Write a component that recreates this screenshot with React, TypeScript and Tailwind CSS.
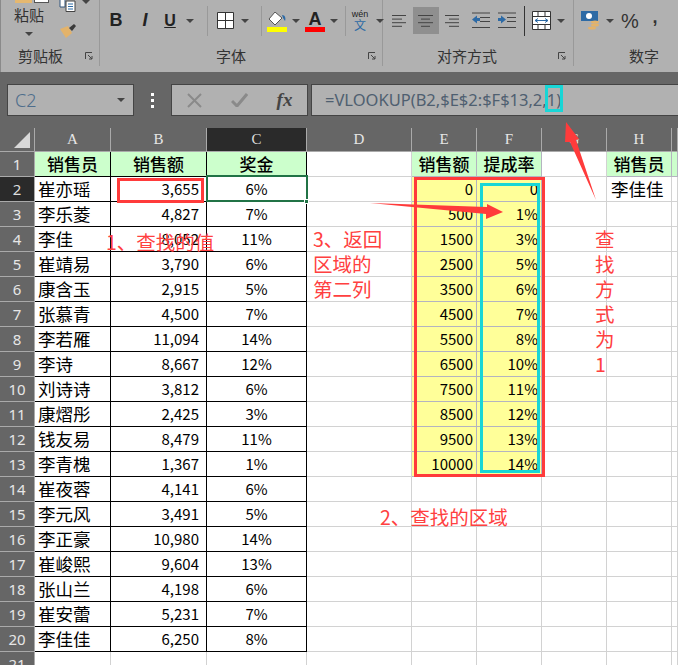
import type { ReactNode } from "react";

const cjk = "font-['Noto_Sans_CJK_SC','Noto_Sans',sans-serif]";
const gridCols = "grid grid-cols-[35px_76px_96px_100px_105px_65px_65px_65px_65px_1fr]";

const sales: [string, string, string][] = [
  ["崔亦瑶", "3,655", "6%"],
  ["李乐菱", "4,827", "7%"],
  ["李佳", "8,052", "11%"],
  ["崔靖易", "3,790", "6%"],
  ["康含玉", "2,915", "5%"],
  ["张慕青", "4,500", "7%"],
  ["李若雁", "11,094", "14%"],
  ["李诗", "8,667", "12%"],
  ["刘诗诗", "3,812", "6%"],
  ["康熠彤", "2,425", "3%"],
  ["钱友易", "8,479", "11%"],
  ["李青槐", "1,367", "1%"],
  ["崔夜蓉", "4,141", "6%"],
  ["李元风", "3,491", "5%"],
  ["李正豪", "10,980", "14%"],
  ["崔峻熙", "9,604", "13%"],
  ["张山兰", "4,198", "6%"],
  ["崔安蕾", "5,231", "7%"],
  ["李佳佳", "6,250", "8%"],
];

const rates: [string, string][] = [
  ["0", "0"],
  ["500", "1%"],
  ["1500", "3%"],
  ["2500", "5%"],
  ["3500", "6%"],
  ["4500", "7%"],
  ["5500", "8%"],
  ["6500", "10%"],
  ["7500", "11%"],
  ["8500", "12%"],
  ["9500", "13%"],
  ["10000", "14%"],
];

function Caret() {
  return <span className="block w-0 h-0 border-x-[4px] border-x-transparent border-t-[4px] border-t-[#444]" />;
}

function Slot({ w, children, className = "" }: { w: number; children?: ReactNode; className?: string }) {
  return (
    <div style={{ width: w }} className={`flex shrink-0 items-center justify-center ${className}`}>
      {children}
    </div>
  );
}

function Launcher() {
  return (
    <svg width="8" height="8" viewBox="0 0 8 8" className="shrink-0">
      <path d="M0.5 7V0.5H7" fill="none" stroke="#444" />
      <path d="M3 3L7 7M7 4V7H4" fill="none" stroke="#444" />
    </svg>
  );
}

function Lines({ rows }: { rows: [number, number][] }) {
  return (
    <svg width="16" height="14" viewBox="0 0 16 14">
      {rows.map(([a, b], i) => (
        <line key={i} x1={a} x2={b} y1={1.5 + i * 3.6} y2={1.5 + i * 3.6} stroke="#444" />
      ))}
    </svg>
  );
}

function Ribbon() {
  return (
    <div className={`h-[72px] bg-[#b1b1b1] border-l border-[#8a8a8a] flex text-[#333] overflow-hidden ${cjk}`}>
      {/* clipboard */}
      <div className="w-[99px] shrink-0 border-r border-[#999] h-[66px] flex flex-col">
        <div className="h-[46px] flex">
          <div className="w-[58px] flex flex-col items-center">
            <div className="flex gap-[2px] h-[3px] ml-[4px]">
              <span className="w-[17px] bg-[#e5b870]" />
              <span className="w-[15px] bg-white border-x border-b border-[#555]" />
            </div>
            <span className="text-[15px] leading-[20px] mt-[2px] -ml-[2px]">粘贴</span>
            <span className="mt-[7px] -ml-[2px]"><Caret /></span>
          </div>
          <div className="flex flex-col">
            <div className="flex items-start">
              <svg width="18" height="12" viewBox="0 0 18 12">
                <path d="M1 0V7H6V0" fill="#fff" stroke="#33567f" />
                <path d="M7 1H16V11.5H7Z" fill="#fff" stroke="#444" />
                <path d="M9 4H14M9 6.5H14M9 9H14" stroke="#2d6aa5" />
              </svg>
              <span className="ml-[5px]"><Caret /></span>
            </div>
            <svg width="18" height="16" viewBox="0 0 18 16" className="mt-[11px]">
              <path d="M1 6L9 3L13 10L7 15Z" fill="#e3b36b" />
              <path d="M10 5L15 1L17 3L13 8Z" fill="#3a3a3a" />
            </svg>
          </div>
        </div>
        <div className="flex items-center mt-[4px] pl-[17px] pr-[6px] justify-between">
          <span className="text-[15px] leading-[20px]">剪贴板</span>
          <Launcher />
        </div>
      </div>
      {/* font */}
      <div className="w-[283px] shrink-0 border-r border-[#999] h-[66px] flex flex-col">
        <div className="h-[46px] flex items-center -mt-[1px]">
          <Slot w={32} className="font-['Liberation_Sans'] font-bold text-[18px] text-[#222]">B</Slot>
          <Slot w={26} className="font-['Liberation_Sans'] italic text-[18px] text-[#222] font-bold">I</Slot>
          <Slot w={24} className="font-['Liberation_Sans'] font-bold text-[16px] text-[#222] underline">U</Slot>
          <Slot w={16}><Caret /></Slot>
          <Slot w={19}><span className="block w-px h-[30px] bg-[#999]" /></Slot>
          <Slot w={17}>
            <svg width="17" height="17" viewBox="0 0 17 17">
              <path d="M0.5 0.5H16.5V16.5H0.5ZM8.5 0.5V16.5M0.5 8.5H16.5" fill="#fff" stroke="#333" />
            </svg>
          </Slot>
          <Slot w={22}><Caret /></Slot>
          <Slot w={11}><span className="block w-px h-[30px] bg-[#999]" /></Slot>
          <Slot w={20} className="flex-col pt-[2px]">
            <svg width="18" height="14" viewBox="0 0 18 14">
              <path d="M7 0L14 6L7 13L1 7Z" fill="#fff" stroke="#555" />
              <path d="M14 3C17 3 18 6 17 9L15 6Z" fill="#2d6aa5" />
            </svg>
            <span className="block w-[20px] h-[5px] bg-[#ffff00] mt-[1px]" />
          </Slot>
          <Slot w={18}><Caret /></Slot>
          <Slot w={20} className="flex-col pt-[2px]">
            <span className="font-['Liberation_Sans'] font-bold text-[18px] leading-[14px] text-[#222]">A</span>
            <span className="block w-[20px] h-[5px] bg-[#f00] mt-[1px]" />
          </Slot>
          <Slot w={18}><Caret /></Slot>
          <Slot w={4}><span className="block w-px h-[30px] bg-[#999]" /></Slot>
          <Slot w={26} className="flex-col font-['Liberation_Sans'] leading-none">
            <span className="text-[9px] text-[#222]">wén</span>
            <span className="text-[12px] text-[#2d6aa5] font-['Noto_Sans_CJK_SC']">文</span>
          </Slot>
          <Slot w={13}><Caret /></Slot>
        </div>
        <div className="flex items-center mt-[4px] h-[20px]">
          <span className="text-[15px] leading-[20px] ml-[116px]">字体</span>
          <span className="ml-[122px]"><Launcher /></span>
        </div>
      </div>
      {/* alignment */}
      <div className="w-[191px] shrink-0 border-r border-[#999] h-[66px] flex flex-col">
        <div className="h-[46px] flex items-center -mt-[1px]">
          <Slot w={30} className="pl-[4px]"><Lines rows={[[0, 14], [0, 10], [0, 14], [0, 10]]} /></Slot>
          <Slot w={26} className="h-[27px] bg-[#8f8f8f]"><Lines rows={[[0, 15], [3, 12], [0, 15], [3, 12]]} /></Slot>
          <Slot w={26}><Lines rows={[[1, 15], [5, 15], [1, 15], [5, 15]]} /></Slot>
          <Slot w={32}>
            <svg width="18" height="17" viewBox="0 0 18 17">
              <path d="M0 1H18M8 5.5H18M8 9.5H18M0 15.5H18" stroke="#444" />
              <path d="M0 7.5L5 3.5V6H8V9H5V11.5Z" fill="#2d6aa5" />
            </svg>
          </Slot>
          <Slot w={20}>
            <svg width="18" height="17" viewBox="0 0 18 17">
              <path d="M0 1H18M9 5.5H18M9 9.5H18M0 15.5H18" stroke="#444" />
              <path d="M8 7.5L3 3.5V6H0V9H3V11.5Z" fill="#2d6aa5" />
            </svg>
          </Slot>
          <Slot w={14}><span className="block w-px h-[30px] bg-[#333]" /></Slot>
          <Slot w={21}>
            <svg width="19" height="19" viewBox="0 0 19 19">
              <path d="M0.5 0.5H18.5V18.5H0.5Z" fill="#fff" stroke="#333" />
              <path d="M0.5 5.5H18.5M0.5 13.5H18.5M6 0.5V5.5M13 0.5V5.5M6 13.5V18.5M13 13.5V18.5" stroke="#333" />
              <path d="M3 9.5H16M3 9.5L6 7.5M3 9.5L6 11.5M16 9.5L13 7.5M16 9.5L13 11.5" stroke="#2d6aa5" fill="none" />
            </svg>
          </Slot>
          <Slot w={18}><Caret /></Slot>
        </div>
        <div className="flex items-center mt-[4px] h-[20px]">
          <span className="text-[15px] leading-[20px] ml-[54px]">对齐方式</span>
          <span className="ml-[61px]"><Launcher /></span>
        </div>
      </div>
      {/* number */}
      <div className="flex-1 h-[66px] flex flex-col">
        <div className="h-[46px] flex items-center -mt-[1px]">
          <Slot w={7} />
          <Slot w={19}>
            <svg width="19" height="21" viewBox="0 0 19 21">
              <rect x="0" y="1" width="17" height="10" fill="#2d6aa5" />
              <circle cx="8" cy="6" r="3" fill="#fff" />
              <ellipse cx="14" cy="12" rx="4" ry="1.5" fill="#e3b36b" />
              <ellipse cx="14" cy="15" rx="4" ry="1.5" fill="#e3b36b" />
              <ellipse cx="11" cy="18" rx="4" ry="1.5" fill="#e3b36b" />
            </svg>
          </Slot>
          <Slot w={20}><Caret /></Slot>
          <Slot w={20} className="font-['Liberation_Sans'] text-[20px] text-[#333]">%</Slot>
          <Slot w={30} className="font-['Liberation_Sans'] font-bold text-[18px] text-[#333] pb-[6px]">,</Slot>
        </div>
        <div className="flex items-center mt-[4px] h-[20px]">
          <span className="text-[15px] leading-[20px] ml-[55px]">数字</span>
        </div>
      </div>
    </div>
  );
}

function FormulaBar() {
  return (
    <div className="h-[56px] bg-[#666666] pt-[12px] pl-[7px] flex items-start">
      <div className="w-[127px] h-[32px] bg-[#b1b1b1] border border-[#444] flex items-center justify-between pl-[7px] pr-[8px]">
        <span className="font-['Noto_Sans'] font-light text-[18px] text-[#4d6d8c]">C2</span>
        <Caret />
      </div>
      <div className="w-[37px] h-[32px] flex flex-col items-center justify-center gap-[3px]">
        <span className="w-[3px] h-[3px] bg-white" />
        <span className="w-[3px] h-[3px] bg-white" />
        <span className="w-[3px] h-[3px] bg-white" />
      </div>
      <div className="w-[137px] h-[32px] bg-[#b1b1b1] border border-[#444] flex items-center">
        <Slot w={45}>
          <svg width="15" height="15" viewBox="0 0 15 15"><path d="M1 1L14 14M14 1L1 14" stroke="#8a8a8a" strokeWidth="2" /></svg>
        </Slot>
        <Slot w={45}>
          <svg width="17" height="14" viewBox="0 0 17 14"><path d="M1 8L6 13L16 1" stroke="#8a8a8a" strokeWidth="3" fill="none" /></svg>
        </Slot>
        <Slot w={45} className="font-['Liberation_Serif'] italic font-bold text-[19px] text-[#444]">fx</Slot>
      </div>
      <div className="ml-[3px] flex-1 h-[32px] bg-[#b1b1b1] border-y border-l border-[#444] flex items-center pl-[13px] font-['Noto_Sans'] text-[16.5px] text-[#4f5f70] whitespace-nowrap">
        =VLOOKUP(B2,$E$2:$F$13,2,1)
      </div>
    </div>
  );
}

function ColHeader({ label, active }: { label?: string; active?: boolean }) {
  return (
    <div className={`flex items-center justify-center border-r border-b border-[#aaaaaa] font-['Liberation_Serif'] text-[15px] ${active ? "bg-[#2a2a2a] text-[#ddd]" : "text-[#e6e6e6]"}`}>
      {label}
    </div>
  );
}

function RowHeader({ n }: { n: number }) {
  return (
    <div className={`flex items-center justify-center border-r border-b border-[#aaaaaa] font-['Noto_Sans'] text-[15px] ${n === 2 ? "bg-[#2a2a2a] text-[#ddd]" : "bg-[#666666] text-[#e6e6e6]"}`}>
      {n}
    </div>
  );
}

function Cell({ children, className = "" }: { children?: ReactNode; className?: string }) {
  return <div className={`flex items-center border-r border-b whitespace-nowrap overflow-hidden ${className}`}>{children}</div>;
}

const blank = "border-[#d2d2d2]";
const edged = "border-black";
const tbl = "border-[#b4b4c0]";

function Sheet() {
  const rows = Array.from({ length: 20 }, (_, i) => i + 2);
  return (
    <div className={`text-black ${cjk}`}>
      <div className={`${gridCols} h-[24px] bg-[#666666]`}>
        <div className="flex items-end justify-end border-r border-b border-[#aaaaaa] pr-[4px] pb-[3px]">
          <svg width="16" height="16" viewBox="0 0 16 16"><path d="M16 0V16H0Z" fill="#d8d8d8" /></svg>
        </div>
        <ColHeader label="A" />
        <ColHeader label="B" />
        <ColHeader label="C" active />
        <ColHeader label="D" />
        <ColHeader label="E" />
        <ColHeader label="F" />
        <ColHeader label="G" />
        <ColHeader label="H" />
        <ColHeader />
      </div>
      <div className={`${gridCols} auto-rows-[25px] text-[15px]`}>
        <RowHeader n={1} />
        <Cell className={`${edged} bg-[#ccffcc] justify-center text-[17px] font-medium`}>销售员</Cell>
        <Cell className={`${edged} bg-[#ccffcc] justify-center text-[17px] font-medium`}>销售额</Cell>
        <Cell className={`${edged} bg-[#ccffcc] justify-center text-[17px] font-medium`}>奖金</Cell>
        <Cell className={blank} />
        <Cell className={`${tbl} bg-[#ccffcc] justify-center text-[17px] font-medium`}>销售额</Cell>
        <Cell className={`${tbl} bg-[#ccffcc] justify-center text-[17px] font-medium`}>提成率</Cell>
        <Cell className={blank} />
        <Cell className={`${tbl} bg-[#ccffcc] justify-center text-[17px] font-medium`}>销售员</Cell>
        <Cell className={`${tbl} bg-[#ccffcc]`} />
        {rows.map((n) => {
          const sale = sales[n - 2];
          const rate = rates[n - 2];
          return (
            <div key={n} className="contents">
              <RowHeader n={n} />
              {sale ? (
                <>
                  <Cell className={`${edged} pl-[3px] text-[17.5px]`}>{sale[0]}</Cell>
                  <Cell className={`${edged} justify-end pr-[7px]`}>{sale[1]}</Cell>
                  <Cell className={`${edged} justify-center`}>{sale[2]}</Cell>
                </>
              ) : (
                <>
                  <Cell className={blank} />
                  <Cell className={blank} />
                  <Cell className={blank} />
                </>
              )}
              <Cell className={blank} />
              {rate ? (
                <>
                  <Cell className={`${tbl} bg-[#ffff99] justify-end pr-[3px]`}>{rate[0]}</Cell>
                  <Cell className={`${tbl} bg-[#ffff99] justify-end pr-[3px]`}>{rate[1]}</Cell>
                </>
              ) : (
                <>
                  <Cell className={blank} />
                  <Cell className={blank} />
                </>
              )}
              <Cell className={blank} />
              <Cell className={`${blank} pl-[4px] text-[17.5px]`}>{n === 2 ? "李佳佳" : null}</Cell>
              <Cell className={blank} />
            </div>
          );
        })}
      </div>
    </div>
  );
}

export default function App() {
  const note = `absolute text-[#ff4040] text-[19.5px] leading-[25px] ${cjk} whitespace-nowrap`;
  return (
    <div className="relative w-[678px] h-[665px] overflow-hidden bg-white">
      <Ribbon />
      <FormulaBar />
      <Sheet />

      {/* markup drawn over the sheet */}
      <div className="absolute left-[206px] top-[175px] w-[102px] h-[27px] border-2 border-[#217346]" />
      <div className="absolute left-[304px] top-[199px] w-[5px] h-[5px] bg-[#217346] border border-white" />
      <div className="absolute left-[117px] top-[178px] w-[87px] h-[25px] border-[3px] border-[#ff3b3b]" />
      <div className="absolute left-[414px] top-[177px] w-[131px] h-[300px] border-[3px] border-[#ff3b3b]" />
      <div className="absolute left-[480px] top-[183px] w-[60px] h-[290px] border-[3px] border-[#18d6d6]" />
      <div className="absolute left-[545px] top-[85px] w-[18px] h-[27px] border-[3px] border-[#18d6d6]" />

      <span className={`${note} left-[106px] top-[229px]`}>1、查找的值</span>
      <span className={`${note} left-[313px] top-[226px]`}>3、返回</span>
      <span className={`${note} left-[313px] top-[251px]`}>区域的</span>
      <span className={`${note} left-[313px] top-[276px]`}>第二列</span>
      <span className={`${note} left-[595px] top-[226px]`}>查</span>
      <span className={`${note} left-[595px] top-[251px]`}>找</span>
      <span className={`${note} left-[595px] top-[276px]`}>方</span>
      <span className={`${note} left-[595px] top-[301px]`}>式</span>
      <span className={`${note} left-[595px] top-[326px]`}>为</span>
      <span className={`${note} left-[595px] top-[351px]`}>1</span>
      <span className={`${note} left-[380px] top-[504px]`}>2、查找的区域</span>

      <svg className="absolute left-0 top-0 pointer-events-none" width="678" height="665" viewBox="0 0 678 665">
        <path d="M370 203L487 207L487 204L503 212L486 219L486 214Z" fill="#ff3b3b" />
        <path d="M566 122L579 139L576 140L596 200L570 142L565 142Z" fill="#ff3b3b" />
      </svg>
    </div>
  );
}
